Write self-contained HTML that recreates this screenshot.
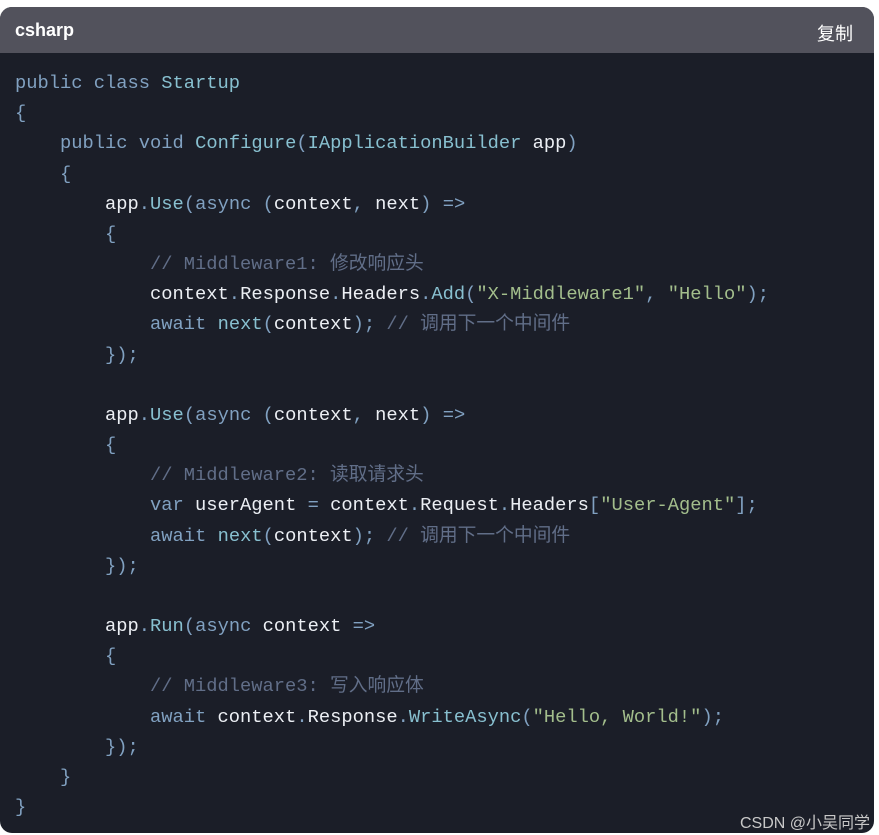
<!DOCTYPE html>
<html><head><meta charset="utf-8"><style>
html,body{margin:0;padding:0;background:#fff;width:879px;height:835px;overflow:hidden}
.box{position:absolute;left:0;top:7px;width:874px;height:826px;background:#1b1e28;border-radius:12px;overflow:hidden}
.hd{height:46px;background:#52525c;color:#fff;font-family:"Liberation Sans","Noto Sans CJK SC",sans-serif;font-size:19px;position:relative}
.hd .l{position:absolute;left:15px;top:13px;font-weight:bold;font-size:18px}
.hd .r{position:absolute;right:21px;top:13px;font-size:18px}
pre{margin:0;padding:0 0 0 15px;position:absolute;top:61px;left:0;font-family:"Liberation Mono","Noto Sans CJK SC",monospace;font-size:18.75px;line-height:30.17px;color:#eceff4}
.k{color:#81a1c1}.f{color:#88c0d0}.p{color:#81a1c1}.s{color:#a3be8c}.c{color:#616e88}
.wm{position:absolute;left:740px;top:809px;font-family:"Liberation Sans","Noto Sans CJK SC",sans-serif;font-size:16px;color:#c8c8c8;white-space:nowrap}
</style></head><body>
<div class="box">
<div class="hd"><span class="l">csharp</span><span class="r">复制</span></div>
<pre><span class="k">public class</span> <span class="f">Startup</span>
<span class="p">{</span>
    <span class="k">public void</span> <span class="f">Configure</span><span class="p">(</span><span class="f">IApplicationBuilder</span> app<span class="p">)</span>
    <span class="p">{</span>
        app<span class="p">.</span><span class="f">Use</span><span class="p">(</span><span class="k">async</span> <span class="p">(</span>context<span class="p">,</span> next<span class="p">)</span> <span class="p">=&gt;</span>
        <span class="p">{</span>
            <span class="c">// Middleware1: 修改响应头</span>
            context<span class="p">.</span>Response<span class="p">.</span>Headers<span class="p">.</span><span class="f">Add</span><span class="p">(</span><span class="s">"X-Middleware1"</span><span class="p">,</span> <span class="s">"Hello"</span><span class="p">);</span>
            <span class="k">await</span> <span class="f">next</span><span class="p">(</span>context<span class="p">);</span> <span class="c">// 调用下一个中间件</span>
        <span class="p">});</span>

        app<span class="p">.</span><span class="f">Use</span><span class="p">(</span><span class="k">async</span> <span class="p">(</span>context<span class="p">,</span> next<span class="p">)</span> <span class="p">=&gt;</span>
        <span class="p">{</span>
            <span class="c">// Middleware2: 读取请求头</span>
            <span class="k">var</span> userAgent <span class="p">=</span> context<span class="p">.</span>Request<span class="p">.</span>Headers<span class="p">[</span><span class="s">"User-Agent"</span><span class="p">];</span>
            <span class="k">await</span> <span class="f">next</span><span class="p">(</span>context<span class="p">);</span> <span class="c">// 调用下一个中间件</span>
        <span class="p">});</span>

        app<span class="p">.</span><span class="f">Run</span><span class="p">(</span><span class="k">async</span> context <span class="p">=&gt;</span>
        <span class="p">{</span>
            <span class="c">// Middleware3: 写入响应体</span>
            <span class="k">await</span> context<span class="p">.</span>Response<span class="p">.</span><span class="f">WriteAsync</span><span class="p">(</span><span class="s">"Hello, World!"</span><span class="p">);</span>
        <span class="p">});</span>
    <span class="p">}</span>
<span class="p">}</span></pre>
</div>
<div class="wm">CSDN @小吴同学</div>
</body></html>
